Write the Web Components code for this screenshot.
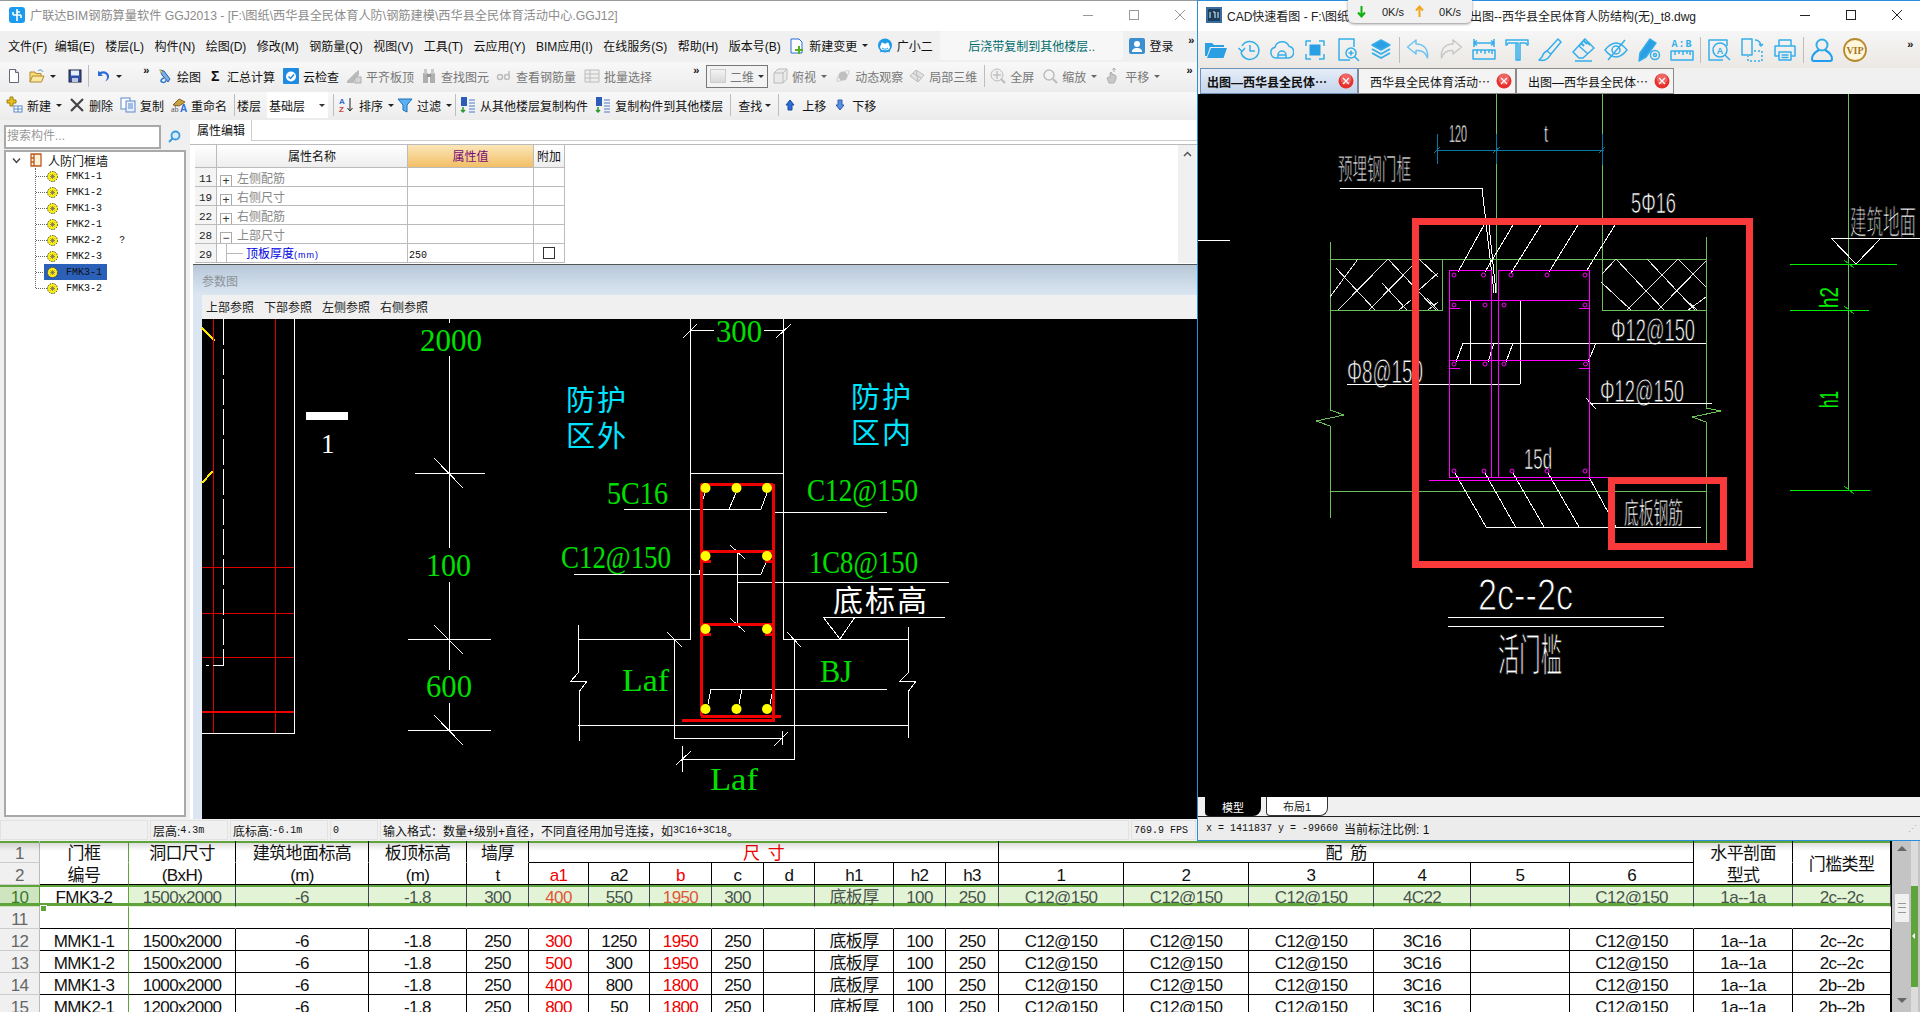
<!DOCTYPE html>
<html lang="zh">
<head>
<meta charset="utf-8">
<title>GGJ2013 + CAD</title>
<style>
  html, body { margin: 0; height: 100%; overflow: hidden; background: #f0f0f0; }
  body { font: 12px "Liberation Sans", "Noto Sans CJK SC", sans-serif; }
  .m { font: 10px "Liberation Mono", "Noto Sans CJK SC", monospace; }
</style>
</head>
<body>
<gl-desktop>
  <ggj-window>
    <title-bar slot="title" tone="gray" logo="ggj">广联达BIM钢筋算量软件 GGJ2013 - [F:\图纸\西华县全民体育人防\钢筋建模\西华县全民体育活动中心.GGJ12]</title-bar>
    <menu-bar slot="menu">
      <span>文件(F)</span><span style="margin-left:-3px">编辑(E)</span><span>楼层(L)</span><span>构件(N)</span><span>绘图(D)</span><span>修改(M)</span><span>钢筋量(Q)</span><span>视图(V)</span><span>工具(T)</span><span>云应用(Y)</span><span>BIM应用(I)</span><span>在线服务(S)</span><span>帮助(H)</span><span>版本号(B)</span>
      <tool-btn icon="newchange" caret style="margin-left:-2px">新建变更</tool-btn>
      <tool-btn icon="robot" style="margin-left:-2px">广小二</tool-btn>
      <notice-box>后浇带复制到其他楼层..</notice-box>
      <tool-btn icon="login" style="margin-left:-4px;">登录</tool-btn>
      <tool-more style="margin-left:4px"></tool-more>
    </menu-bar>
    <tool-bar slot="tools" h="30" style="padding-left:6px">
      <tool-btn icon="new"></tool-btn>
      <tool-btn icon="open" caret style="margin-left:7px"></tool-btn>
      <tool-btn icon="save" style="margin-left:11px"></tool-btn>
      <tool-sep style="margin-left:5px"></tool-sep>
      <tool-btn icon="undo" caret style="margin-left:6px"></tool-btn>
      <tool-more style="margin-left:21px"></tool-more>
      <tool-btn icon="draw" style="margin-left:5px">绘图</tool-btn>
      <tool-btn icon="sigma" tight style="margin-left:8px">汇总计算</tool-btn>
      <tool-btn icon="check" style="margin-left:8px">云检查</tool-btn>
      <tool-btn icon="align" dim style="margin-left:7px">平齐板顶</tool-btn>
      <tool-btn icon="find" dim style="margin-left:7px">查找图元</tool-btn>
      <tool-btn icon="glasses" dim style="margin-left:7px">查看钢筋量</tool-btn>
      <tool-btn icon="batch" dim style="margin-left:8px">批量选择</tool-btn>
      <tool-more style="margin-left:41px"></tool-more>
      <combo-box style="margin-left:4px" w="62" boxed dim>二维</combo-box>
      <tool-btn icon="cube" dim caret style="margin-left:4px">俯视</tool-btn>
      <tool-btn icon="orbit" dim style="margin-left:8px">动态观察</tool-btn>
      <tool-btn icon="part3d" dim style="margin-left:6px">局部三维</tool-btn>
      <tool-sep style="margin-left:7px"></tool-sep>
      <tool-btn icon="full" dim style="margin-left:5px">全屏</tool-btn>
      <tool-btn icon="zoom" dim caret style="margin-left:8px">缩放</tool-btn>
      <tool-btn icon="pan" dim caret style="margin-left:8px">平移</tool-btn>
      <tool-more style="margin-left:26px"></tool-more>
    </tool-bar>
    <tool-bar slot="tools" h="28" style="padding-left:7px">
      <tool-btn icon="plus" caret>新建</tool-btn>
      <tool-btn icon="cross" style="margin-left:7px">删除</tool-btn>
      <tool-btn icon="copy" style="margin-left:7px">复制</tool-btn>
      <tool-btn icon="rename" style="margin-left:7px">重命名</tool-btn>
      <tool-sep style="margin-left:7px"></tool-sep>
      <span style="margin-left:2px">楼层</span>
      <combo-box style="margin-left:6px" w="61">基础层</combo-box>
      <tool-sep style="margin-left:5px"></tool-sep>
      <tool-btn icon="sort" caret style="margin-left:5px">排序</tool-btn>
      <tool-btn icon="filter" caret style="margin-left:3px">过滤</tool-btn>
      <tool-sep style="margin-left:3px"></tool-sep>
      <tool-btn icon="floors" style="margin-left:4px">从其他楼层复制构件</tool-btn>
      <tool-btn icon="floors" style="margin-left:7px">复制构件到其他楼层</tool-btn>
      <tool-sep style="margin-left:7px"></tool-sep>
      <span style="margin-left:7px">查找</span><tool-btn caret style="margin-left:2px"></tool-btn>
      <tool-sep style="margin-left:7px"></tool-sep>
      <tool-btn icon="up" style="margin-left:3px">上移</tool-btn>
      <tool-btn icon="down" style="margin-left:6px">下移</tool-btn>
    </tool-bar>
    <tree-panel slot="side">
      <tree-item>FMK1-1</tree-item>
      <tree-item>FMK1-2</tree-item>
      <tree-item>FMK1-3</tree-item>
      <tree-item>FMK2-1</tree-item>
      <tree-item note="？">FMK2-2</tree-item>
      <tree-item>FMK2-3</tree-item>
      <tree-item selected>FMK3-1</tree-item>
      <tree-item>FMK3-2</tree-item>
    </tree-panel>
    <prop-table slot="main"></prop-table>
    <param-panel slot="main"></param-panel>
    <status-bar slot="status">
      <status-cell w="148"></status-cell>
      <status-cell w="78">层高:<span class="m">4.3m</span></status-cell>
      <status-cell w="98">底标高:<span class="m">-6.1m</span></status-cell>
      <status-cell w="48"><span class="m">0</span></status-cell>
      <status-cell w="749">输入格式：数量+级别+直径，不同直径用加号连接，如<span class="m">3C16+3C18</span>。</status-cell>
      <status-cell w="65"><span class="m">769.9 FPS</span></status-cell>
    </status-bar>
  </ggj-window>

  <cad-window>
    <title-bar slot="title" logo="cad">
      <span>CAD快速看图 - F:\图纸</span><span style="margin-left:121px">出图--西华县全民体育人防结构(无)_t8.dwg</span>
    </title-bar>
    <net-speed slot="float"></net-speed>
    <cad-toolbar slot="tools">
      <cad-icon name="folder"></cad-icon><cad-icon name="clock"></cad-icon><cad-icon name="cloud"></cad-icon><cad-icon name="frame"></cad-icon><cad-icon name="docz"></cad-icon><cad-icon name="layers"></cad-icon>
      <tool-sep></tool-sep>
      <cad-icon name="back"></cad-icon><cad-icon name="redo"></cad-icon><cad-icon name="ruler"></cad-icon><cad-icon name="tee"></cad-icon><cad-icon name="brush"></cad-icon><cad-icon name="eraser"></cad-icon><cad-icon name="eye"></cad-icon><cad-icon name="pengear"></cad-icon><cad-icon name="ab"></cad-icon>
      <tool-sep></tool-sep>
      <cad-icon name="doca"></cad-icon><cad-icon name="swap"></cad-icon><cad-icon name="print"></cad-icon>
      <tool-sep></tool-sep>
      <cad-icon name="user"></cad-icon><cad-icon name="vip"></cad-icon>
      <tool-more style="margin-left:auto;margin-right:4px"></tool-more>
    </cad-toolbar>
    <cad-tabs slot="tabs">
      <cad-tab active>出图—西华县全民体⋯</cad-tab>
      <cad-tab>西华县全民体育活动⋯</cad-tab>
      <cad-tab>出图—西华县全民体⋯</cad-tab>
    </cad-tabs>
    <cad-drawing slot="drawing"></cad-drawing>
    <layout-tabs slot="layouts"></layout-tabs>
    <cad-status slot="status"></cad-status>
  </cad-window>

  <rebar-sheet></rebar-sheet>
</gl-desktop>

<script>
const FONT = '"Liberation Sans", "Noto Sans CJK SC", sans-serif';

// coloured 16x16 icons of the left window
const ICONS = {
  ggj: '<rect x="0" y="0" width="16" height="16" rx="3" fill="#1b9bf0"/><path d="M8 2v12M4 8h8M4 5v3M12 8v3M8 5h3" stroke="#fff" stroke-width="1.6" fill="none"/>',
  cad: '<rect x="0" y="0" width="16" height="16" fill="#3a6c9c"/><rect x="2" y="2" width="12" height="12" fill="#1c3c60"/><path d="M4 5v6M7 5h2v6M12 5v6" stroke="#dfe" fill="none"/>',
  new: '<path d="M3.5 1.5h6l3 3v10h-9z" fill="#fff" stroke="#667"/><path d="M9.5 1.5v3h3" fill="#e6e6e6" stroke="#667"/>',
  open: '<path d="M1 14V4h5l1 1.5h5V8" fill="#f8d878" stroke="#b08a30"/><path d="M1 14l2.5-6H15l-2.5 6z" fill="#fbe7a0" stroke="#b08a30"/><path d="M9 3c2-2 4-1 5 1" stroke="#3a8ad0" fill="none"/>',
  save: '<rect x="2" y="2" width="12" height="12" fill="#3050a8" stroke="#223"/><rect x="4" y="2.5" width="8" height="5" fill="#e8eefc"/><rect x="5" y="10" width="6" height="4" fill="#bcc8e0"/>',
  undo: '<path d="M3 3v5h5L6 6c3-1.500 6 0 6 3 0 2-1 3.500-2 4.500 3-1 4.500-3.500 4-6C13 4 9 2 5 4z" fill="#2a6cd8"/>',
  draw: '<path d="M3 2l4 1 6 8-2 3-6-7z" fill="#7ab0e8" stroke="#2a5ca0"/><path d="M7 10c-3 1-4 3-2 4s4 0 4-2" fill="none" stroke="#2a7ad0" stroke-width="1.500"/><path d="M2 1l3 2-1 3z" fill="#e8c040"/>',
  sigma: '<text x="2" y="13" font-size="14" font-weight="bold" font-family="Liberation Sans" fill="#111">Σ</text>',
  check: '<rect x="0" y="0" width="16" height="16" rx="1" fill="#1e8ae0"/><circle cx="8" cy="8.500" r="5" fill="#fff"/><path d="M5.500 8.500l2 2 3.500-4" stroke="#1e8ae0" stroke-width="1.500" fill="none"/>',
  align: '<path d="M1 13l9-9 3-2v5l-5 6v2H1z" fill="#a8a8a8"/><rect x="9" y="9" width="6" height="6" fill="#ccc" stroke="#999"/>',
  find: '<rect x="2" y="5" width="5" height="10" fill="#999"/><rect x="9" y="5" width="5" height="10" fill="#999"/><rect x="3" y="1" width="3" height="5" fill="#bbb"/><rect x="10" y="1" width="3" height="5" fill="#bbb"/><rect x="6" y="6" width="4" height="3" fill="#777"/>',
  glasses: '<circle cx="4" cy="9" r="2.500" fill="none" stroke="#aaa" stroke-width="1.500"/><circle cx="11" cy="9" r="2.500" fill="none" stroke="#aaa" stroke-width="1.500"/><path d="M13 7V3" stroke="#aaa" stroke-width="1.500"/>',
  batch: '<path d="M1 2h14v12H1zM1 6h14M1 10h14M6 2v12" fill="#eee" stroke="#aaa"/>',
  cube: '<path d="M2 5l4-4h9v10l-4 4H2zM2 5h9v10M11 5l4-4" fill="#e8e8e8" stroke="#aaa"/>',
  orbit: '<ellipse cx="8" cy="8" rx="7.500" ry="2.500" fill="none" stroke="#bbb" transform="rotate(-40 8 8)"/><circle cx="8" cy="8" r="4.500" fill="#b0b0b0"/>',
  part3d: '<path d="M1 8l6-6 8 5-6 7z" fill="#ddd" stroke="#aaa"/><path d="M4 5l8 5M7 2l2 12" stroke="#aaa"/>',
  full: '<circle cx="7" cy="7" r="6" fill="#eee" stroke="#aaa"/><path d="M7 3v8M3 7h8" stroke="#999"/><path d="M11 11l4 4" stroke="#aaa" stroke-width="2"/>',
  zoom: '<circle cx="7" cy="7" r="5" fill="#f4f4f4" stroke="#aaa" stroke-width="1.500"/><path d="M11 11l4 4" stroke="#aaa" stroke-width="2"/>',
  pan: '<path d="M4 15l-2-5 2-1 1 1V5l1-1 1 1v2l1-1 1 1 1 0 1 1v3l-2 4z" fill="#bbb" stroke="#999"/><path d="M9 4V0M7.500 2L9 0l1.500 2" stroke="#999" fill="none"/>',
  plus: '<path d="M3 0h3v3h3v3H6v3H3V6H0V3h3z" fill="#e8c020" stroke="#a08010"/><rect x="7" y="9" width="8" height="6" fill="#fff" stroke="#5a8ac8"/><path d="M7 12h8M11 9v6" stroke="#5a8ac8"/>',
  cross: '<path d="M2 2l12 12M14 2L2 14" stroke="#444" stroke-width="2.200"/>',
  copy: '<rect x="1" y="1" width="9" height="11" fill="#fff" stroke="#5a8ac8"/><rect x="6" y="4" width="9" height="11" fill="#e8f0ff" stroke="#5a8ac8"/><path d="M8 7h5M8 9h5M8 11h5" stroke="#5a8ac8"/>',
  rename: '<path d="M2 8l6-6 6 3-6 4z" fill="#c8a040" stroke="#806020"/><text x="0" y="15" font-size="8" font-family="Liberation Serif" fill="#555">ab</text><text x="9" y="15" font-size="10" font-weight="bold" font-family="Liberation Sans" fill="#2a6cd8">A</text>',
  sort: '<text x="0" y="7" font-size="8" font-weight="bold" font-family="Liberation Sans" fill="#2a6cd8">A</text><text x="0" y="15" font-size="8" font-weight="bold" font-family="Liberation Sans" fill="#d04040">Z</text><path d="M11 1v13M8.500 11l2.500 3 2.500-3" stroke="#222" fill="none"/>',
  filter: '<path d="M1 2h14L10 8v7l-4-2V8z" fill="#5ab0f0" stroke="#1c70b8"/>',
  floors: '<rect x="1" y="0" width="6" height="9" fill="#2a5cb8"/><path d="M3 10v5M1 13l2 2 2-2" stroke="#2a9a30" stroke-width="1.500" fill="none"/><path d="M9 3h6M9 6h6M9 9h6M9 12h6M9 15h6" stroke="#4a7ac8"/>',
  up: '<path d="M8 3l4 5h-2v5H6V8H4z" fill="#2a6cd8" stroke="#1a4ca0"/>',
  down: '<path d="M8 13l4-5h-2V3H6v5H4z" fill="#5a8ce0" stroke="#2a5cb0"/>',
  newchange: '<path d="M2 1h8l3 3v11H2z" fill="#fff" stroke="#2a6cd8"/><path d="M11 8v3h3v2h-3v3H9v-3H6v-2h3V8z" fill="#50b020"/>',
  robot: '<circle cx="8" cy="7.500" r="7" fill="#1e9be8"/><ellipse cx="8" cy="9" rx="5" ry="3.500" fill="#fff"/><circle cx="5.500" cy="6" r="1.500" fill="#fff"/><circle cx="10.500" cy="6" r="1.500" fill="#fff"/><path d="M5 10c1.500 1.500 4.500 1.500 6 0" stroke="#1e9be8" fill="none"/><path d="M3 14l2-1h6l2 1" stroke="#1e9be8" fill="none"/>',
  login: '<rect x="0" y="0" width="16" height="16" rx="2" fill="#3a8fd0"/><circle cx="8" cy="6" r="3" fill="#fff"/><path d="M3 14c0-3 2-4 5-4s5 1 5 4z" fill="#fff"/>'
};

// blue line icons of the CAD toolbar, 24x24
const CAD_ICONS = {
  folder: '<path d="M1 5h7l2 2h10v2H6l-3 9H1z" fill="#2a9fe4" stroke="none"/><path d="M7 10h16l-3.500 10H3z" fill="#2a9fe4" stroke="none"/>',
  clock: '<path d="M5 8a9 9 0 1 1-1 6"/><path d="M1.500 10L5 13.500 8 10" /><path d="M13 7v6h5"/>',
  cloud: '<path d="M6 20a5.500 5.500 0 0 1-1-10.800 7.500 7.500 0 0 1 14-1A6 6 0 0 1 18.500 20z"/><path d="M8 20v-3a4 4 0 0 1 8 0v3M8 17h8"/>',
  frame: '<path d="M3 8V3h5M16 3h5v5M21 16v5h-5M8 21H3v-5"/><rect x="6.500" y="6.500" width="11" height="11" fill="#2a9fe4" stroke="none"/>',
  docz: '<path d="M14 22H3V1h15v8"/><circle cx="15" cy="15" r="5"/><path d="M18.500 18.500L23 23M15 12.500v5M12.500 15h5"/>',
  layers: '<path d="M12 2l9 5-9 5-9-5z" fill="#2a9fe4"/><path d="M3 11l9 5 9-5M3 15l9 5 9-5" stroke-width="2"/>',
  back: '<path d="M1.500 9L10 2v4c8 0 12.500 5 11.500 14-1.500-5-5-8-11.500-7.500V16z" stroke="#6ec4f0"/>',
  redo: '<path d="M22.500 9L14 2v4C6 6 1.500 11 2.500 20c1.500-5 5-8 11.500-7.500V16z" stroke="#c8c8c8"/>',
  ruler: '<path d="M2 1v8M22 1v8M2 5h20M5 2.500L2 5l3 2.500M19 2.500L22 5l-3 2.500"/><rect x="1" y="12" width="22" height="9"/><path d="M5 12v4M9 12v3M13 12v4M17 12v3M20 12v4"/>',
  tee: '<path d="M1 2h22v5h-1l-1-2h-6v17h-2V5H3L2 7H1z"/><path d="M11 5v17h2"/>',
  brush: '<path d="M20 1l3 3-10 12-4-3z"/><path d="M9 13c-3 1-4 3-5 6l-3 3c4 1 9 0 12-6"/>',
  eraser: '<path d="M14 1l9 9-11 10H8L2 14z"/><path d="M8 8l9 8M14 1l-6 7" /><path d="M10 5l3 3M13 3l3 3M16 4l3 3" stroke-width="2"/><path d="M4 23h17"/>',
  eye: '<path d="M1 12c4-5 7.500-7 11-7s7 2 11 7c-4 5-7.500 7-11 7s-7-2-11-7z"/><circle cx="12" cy="12" r="4"/><path d="M4 22L21 2"/>',
  pengear: '<path d="M13 1l6 4-10 14-7 4 1-8z" fill="#2a9fe4"/><circle cx="18" cy="17" r="4.500"/><circle cx="18" cy="17" r="1.500"/>',
  ab: '<text x="12" y="9" font-size="10" font-weight="bold" text-anchor="middle" fill="#35aeea" stroke="none" font-family="Liberation Mono" letter-spacing="1">A:B</text><rect x="1" y="13" width="22" height="9"/><path d="M5 13v4M9 13v3M13 13v4M17 13v3M20 13v4"/>',
  doca: '<path d="M20 8V2H2v20h14"/><circle cx="13" cy="12" r="7"/><path d="M18 17l5 5"/><text x="13" y="15.500" font-size="9" font-weight="bold" text-anchor="middle" fill="#35aeea" stroke="none" font-family="Liberation Sans">A</text>',
  swap: '<rect x="2" y="1" width="10" height="16"/><path d="M14 13h8v10H8v-5" stroke-dasharray="2 2"/><path d="M15 2c3 0 5 2 6 5M19 6l2 2 2-2"/>',
  print: '<path d="M6 8V2h12v6M6 18H2V8h20v10h-4"/><path d="M6 14h12v8H6zM8.500 17h7M8.500 19.500h7"/>',
  user: '<circle cx="12" cy="7" r="5.500" stroke-width="2"/><path d="M9 12c-4 2-7 5-7 9 0 1 1 2 2 2h16c1 0 2-1 2-2 0-4-3-7-7-9" stroke-width="2" stroke="#1e9ef0"/>',
  vip: '<circle cx="12" cy="12" r="11" stroke="#b88a30" stroke-width="1.800" fill="#fff6dc"/><text x="12" y="15.500" font-size="10" font-weight="bold" text-anchor="middle" fill="#a87820" stroke="none" font-family="Liberation Serif">VIP</text>'
};

class GlDesktop extends HTMLElement {
  connectedCallback() {
    this.attachShadow({ mode: "open" }).innerHTML = `
      <style>
        :host { display: grid; width: 1920px; height: 1012px; overflow: hidden;
          grid-template-columns: 1197px 723px; grid-template-rows: 841px 171px; }
        ::slotted(rebar-sheet) { grid-column: 1 / 3; }
      </style>
      <slot></slot>`;
  }
}

class GgjWindow extends HTMLElement {
  connectedCallback() {
    this.attachShadow({ mode: "open" }).innerHTML = `
      <style>
        :host { display: flex; flex-direction: column; min-width: 0; background: #f0f0f0; border-top: 1px solid #999; box-sizing: border-box; font: 12px ${FONT}; color: #111; }
        .body { display: flex; height: 699px; background: #fff; }
        .side { width: 190px; flex: none; background: #f0f0f0; }
        .main { flex: 1; min-width: 0; display: flex; flex-direction: column; }
      </style>
      <slot name="title"></slot>
      <slot name="menu"></slot>
      <slot name="tools"></slot>
      <div class="body">
        <div class="side"><slot name="side"></slot></div>
        <div class="main"><slot name="main"></slot></div>
      </div>
      <slot name="status"></slot>`;
  }
}

class TitleBar extends HTMLElement {
  connectedCallback() {
    const gray = this.getAttribute("tone") === "gray";
    const c = gray ? "#999" : "#222";
    const logo = this.getAttribute("logo");
    this.attachShadow({ mode: "open" }).innerHTML = `
      <style>
        :host { display: flex; align-items: center; height: 30px; flex: none; box-sizing: border-box; padding-bottom: 2px; background: #fff; font: ${gray ? 12.2 : 12}px ${FONT}; color: ${gray ? "#8c8c8c" : "#222"}; white-space: nowrap; }
        svg { flex: none; }
        .logo { width: 16px; height: 16px; margin: 0 5px 0 ${logo === "cad" ? 8 : 9}px; }
        .txt { flex: 1; min-width: 0; overflow: hidden; }
        .ctl { display: flex; margin-right: ${gray ? 11 : 17}px; gap: 34px; }
        .ctl svg { width: 12px; height: 12px; }
      </style>
      <svg class="logo" viewBox="0 0 16 16">${ICONS[logo]}</svg>
      <div class="txt"><slot></slot></div>
      <div class="ctl">
        <svg viewBox="0 0 12 12"><path d="M1 6.500h10" stroke="${c}" fill="none"/></svg>
        <svg viewBox="0 0 12 12"><rect x="1.500" y="1.500" width="9" height="9" stroke="${c}" fill="none"/></svg>
        <svg viewBox="0 0 12 12"><path d="M1 1l10 10M11 1L1 11" stroke="${c}" fill="none"/></svg>
      </div>`;
  }
}

class MenuBar extends HTMLElement {
  connectedCallback() {
    this.attachShadow({ mode: "open" }).innerHTML = `
      <style>
        :host { display: flex; align-items: center; gap: 10.5px; height: 31px; flex: none; box-sizing: border-box; padding: 0 0 2px 8px; background: #f0f0f0; font: 12px ${FONT}; color: #111; white-space: nowrap; }
      </style>
      <slot></slot>`;
  }
}

class NoticeBox extends HTMLElement {
  connectedCallback() {
    this.attachShadow({ mode: "open" }).innerHTML = `
      <style>
        :host { display: flex; align-items: center; justify-content: center; width: 186px; height: 29px; box-sizing: border-box; background: #f7f7f7; color: #006d6d; border-radius: 3px; margin-left: -3px; font: 12px ${FONT}; }
      </style>
      <slot></slot>`;
  }
}

class ToolBar extends HTMLElement {
  connectedCallback() {
    const h = this.getAttribute("h") || 30;
    this.attachShadow({ mode: "open" }).innerHTML = `
      <style>
        :host { display: flex; align-items: center; height: ${h}px; flex: none; box-sizing: border-box; padding-bottom: 2px; background: linear-gradient(#f8f8f8, #ececec); font: 12px ${FONT}; color: #111; white-space: nowrap; }
      </style>
      <slot></slot>`;
  }
}

class ToolBtn extends HTMLElement {
  connectedCallback() {
    const icon = this.getAttribute("icon");
    const tight = this.hasAttribute("tight");
    const caret = this.hasAttribute("caret");
    const label = this.textContent.trim();
    this.attachShadow({ mode: "open" }).innerHTML = `
      <style>
        :host { display: inline-flex; align-items: center; flex: none; gap: ${tight ? 2 : 4}px; font: 12px ${FONT}; color: #111; }
        :host([dim]) { color: #777; }
        :host([dim]) svg { opacity: .75; }
        svg { width: 16px; height: 16px; flex: none; overflow: visible; }
        .caret { width: 0; height: 0; border: 3px solid transparent; border-top: 3px solid #222; border-bottom: 0; margin-left: 1px; }
        :host([dim]) .caret { border-top-color: #666; }
      </style>
      ${icon ? `<svg viewBox="0 0 16 16">${ICONS[icon]}</svg>` : ""}
      ${label ? "<slot></slot>" : ""}
      ${caret ? '<span class="caret"></span>' : ""}`;
  }
}

class ToolSep extends HTMLElement {
  connectedCallback() {
    this.attachShadow({ mode: "open" }).innerHTML = `
      <style>:host { display: block; width: 1px; height: 22px; background: #bdbdbd; flex: none; }</style>`;
  }
}

class ToolMore extends HTMLElement {
  connectedCallback() {
    this.attachShadow({ mode: "open" }).innerHTML = `
      <style>:host { display: block; flex: none; width: 9px; height: 22px; font: bold 11px/12px "Liberation Mono", monospace; color: #111; letter-spacing: -2px; }</style>»`;
  }
}

class ComboBox extends HTMLElement {
  connectedCallback() {
    const boxed = this.hasAttribute("boxed");
    this.attachShadow({ mode: "open" }).innerHTML = `
      <style>
        :host { display: flex; align-items: center; flex: none; width: ${this.getAttribute("w")}px; height: ${boxed ? 23 : 26}px; box-sizing: border-box; background: #fff; padding-left: 2px; gap: 4px; font: 12px ${FONT}; color: #111; position: relative; }
        :host([boxed]) { border: 1px solid #777; background: #f3f3f3; padding-left: 3px; color: #777; }
        i { width: 14px; height: 12px; background: linear-gradient(#f4f4f4,#d8d8d8); border: 1px solid #ccc; }
        .caret { margin-left: auto; margin-right: 3px; width: 0; height: 0; border: 3px solid transparent; border-top-color: #333; border-bottom: 0; }
      </style>
      ${boxed ? "<i></i>" : ""}<slot></slot><span class="caret"></span>`;
  }
}

class TreePanel extends HTMLElement {
  connectedCallback() {
    this.attachShadow({ mode: "open" }).innerHTML = `
      <style>
        :host { display: block; height: 699px; box-sizing: border-box; padding: 5px 4px 0 4px; font: 12px ${FONT}; }
        .search { display: flex; align-items: center; gap: 5px; height: 24px; }
        .box { width: 157px; height: 24px; box-sizing: border-box; border: 2px solid #a9a9a9; background: #fff; color: #999; padding: 0 1px; line-height: 18px; }
        .search svg { width: 14px; height: 14px; margin-left: 1px; }
        .tree { height: 667px; margin-top: 1px; box-sizing: border-box; border: 2px solid #a9a9a9; background: #fff; }
        .root { display: flex; align-items: center; height: 16px; }
        .root .chev { width: 9px; height: 9px; margin-left: 6px; }
        .root .door { width: 12px; height: 14px; margin: 0 6px 0 9px; }
        .kids { margin-left: 29px; border-left: 1px dotted #666; height: 120px; }
      </style>
      <div class="search">
        <div class="box">搜索构件...</div>
        <svg viewBox="0 0 14 14"><circle cx="8.500" cy="5.500" r="4" fill="#d8ecfa" stroke="#3a9be0" stroke-width="1.800"/><path d="M5.500 8.500L2 12" stroke="#3a9be0" stroke-width="2"/></svg>
      </div>
      <div class="tree">
        <div class="root">
          <svg class="chev" viewBox="0 0 9 9"><path d="M1 2.500l3.500 4 3.500-4" fill="none" stroke="#444" stroke-width="1.400"/></svg>
          <svg class="door" viewBox="0 0 12 14"><path d="M1 1h10v12H1zM4 1v12M1 5h3M1 9h3" fill="#fff2d8" stroke="#b85a20" stroke-width="1.300"/></svg>
          <span>人防门框墙</span>
        </div>
        <div class="kids"><slot></slot></div>
      </div>`;
  }
}

class TreeItem extends HTMLElement {
  connectedCallback() {
    const note = this.getAttribute("note");
    this.attachShadow({ mode: "open" }).innerHTML = `
      <style>
        :host { display: flex; align-items: center; height: 16px; font: 10px "Liberation Mono", monospace; color: #111; position: relative; white-space: nowrap; }
        .dash { width: 11px; border-top: 1px dotted #666; }
        svg { width: 11px; height: 11px; margin-right: 8px; flex: none; position: relative; }
        .hi { position: absolute; left: 8px; top: 0; width: 63px; height: 16px; background: #2b60b8; }
        b { font-weight: normal; position: absolute; left: 81px; font-size: 10px; }
        span { position: relative; }
      </style>
      ${this.hasAttribute("selected") ? '<div class="hi"></div>' : ""}
      <div class="dash"></div>
      <svg viewBox="0 0 11 11"><circle cx="5.500" cy="5.500" r="5" fill="#ffef10" stroke="#444" stroke-dasharray="1.500 1"/><path d="M3 5.500h5M5.500 3v5M3.500 3.500l4 4M7.500 3.500l-4 4" stroke="#666" stroke-width=".7"/></svg>
      <span><slot></slot></span>
      ${note ? `<b>${note}</b>` : ""}`;
  }
}

class PropTable extends HTMLElement {
  connectedCallback() {
    const rows = [["11", "+", "左侧配筋"], ["19", "+", "右侧尺寸"], ["22", "+", "右侧配筋"], ["28", "−", "上部尺寸"]];
    this.attachShadow({ mode: "open" }).innerHTML = `
      <style>
        :host { display: block; flex: none; height: 144px; font: 12px ${FONT}; color: #111; background: #fff; }
        .tabs { height: 21px; border-bottom: 1px solid #ccc; box-sizing: border-box; }
        .tab { display: inline-block; width: 62px; height: 21px; box-sizing: border-box; background: #fff; border-right: 1px solid #ccc; padding: 1px 0 0 7px; font-size: 12px; }
        .wrap { display: flex; margin-top: 3px; border-top: 1px solid #bbb; height: 119px; box-sizing: border-box; padding-left: 5px; }
        table { border-collapse: separate; border-spacing: 0; table-layout: fixed; width: 370px; align-self: flex-start; }
        td, th { border-right: 1px solid #bbb; border-bottom: 1px solid #bbb; padding: 0; font-weight: normal; height: 19px; box-sizing: border-box; line-height: 17px; vertical-align: bottom; overflow: hidden; }
        th { height: 23px; line-height: 21px; background: linear-gradient(#fff, #eee); }
        th.v { background: linear-gradient(#fbe6b8, #f2bf66); color: #7a0a7a; }
        th span { position: relative; top: 1px; }
        .t { position: relative; top: 2px; }
        .n { font: 11px/17px "Liberation Mono", monospace; text-align: center; background: #f4f4f4; color: #222; }
        .p { color: #888; white-space: nowrap; }
        .p i { display: inline-block; width: 12px; height: 12px; line-height: 11px; border: 1px solid #aaa; text-align: center; color: #333; font-style: normal; margin: 0 5px 0 3px; vertical-align: -2px; font-size: 12px; box-sizing: border-box; }
        .blue { color: #0000e0; padding-left: 29px; position: relative; white-space: nowrap; }
        .blue::before { content: ""; position: absolute; left: 9px; top: 0; bottom: 0; border-left: 1px solid #bbb; }
        .blue::after { content: ""; position: absolute; left: 9px; top: 9px; width: 17px; border-top: 1px solid #bbb; }
        .blue small { font-size: 9px; letter-spacing: 1px; }
        .mono { font: 10px/17px "Liberation Mono", monospace; padding-left: 1px; }
        .chk { text-align: center; vertical-align: middle; }
        .chk i { display: block; margin: auto; width: 12px; height: 12px; border: 1px solid #333; box-sizing: border-box; }
        .sb { margin-left: auto; width: 18px; margin-right: 1px; background: #f0f0f0; text-align: center; padding-top: 6px; height: 112px; }
        .sb svg { display: block; margin: auto; }
      </style>
      <div class="tabs"><span class="tab">属性编辑</span></div>
      <div class="wrap">
        <table>
          <colgroup><col style="width:22px"><col style="width:191px"><col style="width:126px"><col style="width:31px"></colgroup>
          <tr><th></th><th><span>属性名称</span></th><th class="v"><span>属性值</span></th><th><span>附加</span></th></tr>
          ${rows.map(r => `<tr><td class="n"><span class="t">${r[0]}</span></td><td class="p"><span class="t"><i>${r[1]}</i>${r[2]}</span></td><td></td><td></td></tr>`).join("")}
          <tr><td class="n"><span class="t">29</span></td><td class="blue"><span class="t">顶板厚度<small>(mm)</small></span></td><td class="mono"><span class="t">250</span></td><td class="chk"><i></i></td></tr>
        </table>
        <div class="sb"><svg width="9" height="6" viewBox="0 0 9 6"><path d="M1 5l3.500-3.500L8 5" fill="none" stroke="#555" stroke-width="1.500"/></svg></div>
      </div>`;
  }
}

class ParamPanel extends HTMLElement {
  connectedCallback() {
    this.attachShadow({ mode: "open" }).innerHTML = `
      <style>
        :host { display: flex; flex-direction: column; flex: 1; margin-left: 3px; border-top: 1px solid #555; font: 12px ${FONT}; min-height: 0; }
        .head { height: 30px; flex: none; background: linear-gradient(#b8c8d8, #dbe6f2); color: #8c9299; padding: 7px 0 0 9px; box-sizing: border-box; }
        .rest { display: flex; flex: 1; background: #dce6f2; padding-left: 9px; min-height: 0; }
        .col { flex: 1; display: flex; flex-direction: column; min-width: 0; }
        .bar { display: flex; gap: 10px; align-items: center; height: 24px; flex: none; box-sizing: border-box; padding: 0 0 2px 4px; background: #f0f0f0; color: #222; }
        param-drawing { flex: 1; }
      </style>
      <div class="head">参数图</div>
      <div class="rest">
        <div class="col">
          <div class="bar"><span>上部参照</span><span>下部参照</span><span>左侧参照</span><span>右侧参照</span></div>
          <param-drawing></param-drawing>
        </div>
      </div>`;
  }
}

// viewBox uses page coordinates, so points read straight off the screenshot
class ParamDrawing extends HTMLElement {
  connectedCallback() {
    const g = (x, y, len, s, size = 31) => `<text x="${x}" y="${y}" font-size="${size}" textLength="${len}" lengthAdjust="spacingAndGlyphs" fill="#00e000">${s}</text>`;
    const c = (x, y, s) => `<text x="${x}" y="${y}" font-size="29" letter-spacing="2" fill="#00e5ff">${s}</text>`;
    const dots = [[705.5,488],[736.5,488],[767,488],[705.5,556],[767,556],[705.5,629],[767,629],[705.5,709],[736.5,709],[767,709]];
    this.attachShadow({ mode: "open" }).innerHTML = `
      <style>
        :host { display: block; background: #000; min-height: 0; }
        svg { display: block; overflow: visible; font-family: "Liberation Serif", "Noto Sans CJK SC", serif; }
      </style>
      <svg width="995" height="499" viewBox="202 319 995 499" shape-rendering="crispEdges">
        <path d="M202 328L215 341M202 483L213 471" stroke="#ffe600" stroke-width="2" fill="none"/>
        <path d="M213 319V733M275 319V733M202 567H294M202 613H294M202 657H294" stroke="#e00000" fill="none"/>
        <path d="M202 712H294" stroke="#f00000" stroke-width="1.500" fill="none"/>
        <path d="M294 319V733H202" stroke="#fff" fill="none"/>
        <path d="M223 319V665H206" stroke="#fff" stroke-dasharray="26 4" fill="none"/>
        <rect x="306" y="412" width="42" height="8" fill="#fff"/>
        <text x="321" y="453" font-size="27" fill="#fff">1</text>
        <path d="M449 319V323M449 356V548M449 582V670M449 703V730M415 473H485M408 639H491M408 730H491M434 458L463 488M434 625L463 654M434 715L463 745" stroke="#fff" fill="none"/>
        ${g(420, 351, 62, "2000")}${g(426, 576, 45, "100")}${g(426, 697, 46, "600")}
        ${c(566, 411, "防护")}${c(566, 447, "区外")}${c(851, 408, "防护")}${c(851, 444, "区内")}
        <path d="M690 319V639H578M783 319V639H908M690 473H783M690 330H714M764 330H783M683 338L697 324M776 338L791 324" stroke="#fff" fill="none"/>
        <path d="M578 625V673L571 681H587L579 692V741M908 627V673L900 681H916L908 692V738M578 725H908" stroke="#fff" fill="none"/>
        <path d="M674 639V738H782M782 731V745M774 746L788 732M667 632L682 647M794 639V759H682M682 746V772M676 765L691 751M787 632L801 647" stroke="#fff" fill="none"/>
        ${g(716, 342, 46, "300")}
        <path d="M624 509H761M574 574H761M705 493L700 509M736 493L729 509M767 493L761 509M703 560L699 574M767 560L761 574M773 512H887M737 582H949M737 552V625M730 545L745 559M730 618L745 632M823 617H945M823 617L840 639L855 617M711 689H887M711 689L708 704M742 689L739 704M773 689L770 704" stroke="#fff" fill="none"/>
        <path d="M701 484V716M773 484V722M701 484H773M701 551H773M701 624H773M701 716H781M682 720H773" stroke="#f00000" stroke-width="3" fill="none"/>
        <path d="M701 561H711M765 561H773M701 634H711M765 634H773" stroke="#f00000" stroke-width="3" fill="none"/>
        ${dots.map(d => `<circle cx="${d[0]}" cy="${d[1]}" r="5" fill="#ffff00" shape-rendering="auto"/>`).join("")}
        ${g(607, 504, 61, "5C16")}${g(561, 568, 110, "C12@150")}${g(807, 501, 111, "C12@150")}${g(809, 573, 109, "1C8@150")}
        <text x="833" y="611" font-size="30" letter-spacing="2" fill="#fff">底标高</text>
        ${g(622, 691, 47, "Laf")}${g(710, 790, 48, "Laf")}${g(820, 682, 32, "BJ")}
      </svg>`;
  }
}

class StatusBar extends HTMLElement {
  connectedCallback() {
    this.attachShadow({ mode: "open" }).innerHTML = `
      <style>
        :host { display: flex; gap: 2px; height: 21px; flex: none; box-sizing: border-box; padding-top: 1px; background: #f0f0f0; font: 12px ${FONT}; color: #111; white-space: nowrap; }
      </style>
      <slot></slot>`;
  }
}

class StatusCell extends HTMLElement {
  connectedCallback() {
    this.attachShadow({ mode: "open" }).innerHTML = `
      <style>
        :host { display: flex; align-items: center; flex: none; width: ${this.getAttribute("w")}px; box-sizing: border-box; padding-left: 2px; border: 1px solid #e2e2e2; font: 12px ${FONT}; overflow: hidden; }
      </style>
      <slot></slot>`;
  }
}

class CadWindow extends HTMLElement {
  connectedCallback() {
    this.attachShadow({ mode: "open" }).innerHTML = `
      <style>
        :host { display: flex; flex-direction: column; position: relative; box-sizing: border-box; border: 1px solid #2b8fdc; border-right: 0; background: #f0f0f0; min-width: 0; }
      </style>
      <slot name="title"></slot>
      <slot name="float"></slot>
      <slot name="tools"></slot>
      <slot name="tabs"></slot>
      <slot name="drawing"></slot>
      <slot name="layouts"></slot>
      <slot name="status"></slot>`;
  }
}

class NetSpeed extends HTMLElement {
  connectedCallback() {
    this.attachShadow({ mode: "open" }).innerHTML = `
      <style>
        :host { position: absolute; left: 150px; top: -1px; width: 124px; height: 23px; box-sizing: border-box; background: #f1f1f1; border-radius: 0 0 6px 6px; box-shadow: 0 1px 3px rgba(0,0,0,.45); display: flex; align-items: center; font: 11px ${FONT}; color: #222; padding-left: 9px; }
        svg { width: 9px; height: 13px; flex: none; }
      </style>
      <svg viewBox="0 0 9 13"><path d="M4.500 1v10M1 7.500l3.500 4 3.500-4" fill="none" stroke="#10b010" stroke-width="2"/></svg>
      <span style="margin-left:16px">0K/s</span>
      <svg style="margin-left:11px" viewBox="0 0 9 13"><path d="M4.500 12V2M1 5.500l3.500-4 3.500 4" fill="none" stroke="#f0a820" stroke-width="2"/></svg>
      <span style="margin-left:15px">0K/s</span>`;
  }
}

class CadToolbar extends HTMLElement {
  connectedCallback() {
    this.attachShadow({ mode: "open" }).innerHTML = `
      <style>
        :host { display: flex; align-items: center; gap: 9px; height: 37px; flex: none; padding-left: 6px; box-sizing: border-box; background: linear-gradient(#f6f6f6, #ebe8e4); }
        ::slotted(tool-sep) { height: 26px; margin: 0 -3px; }
      </style>
      <slot></slot>`;
  }
}

class CadIcon extends HTMLElement {
  connectedCallback() {
    this.attachShadow({ mode: "open" }).innerHTML = `
      <style>
        :host { display: block; width: 24px; height: 24px; flex: none; }
        svg { display: block; fill: none; stroke: #35aeea; stroke-width: 1.500; stroke-linejoin: round; }
      </style>
      <svg width="24" height="24" viewBox="0 0 24 24">${CAD_ICONS[this.getAttribute("name")]}</svg>`;
  }
}

class CadTabs extends HTMLElement {
  connectedCallback() {
    this.attachShadow({ mode: "open" }).innerHTML = `
      <style>:host { display: flex; height: 26px; flex: none; padding-left: 2px; background: #f0f0f0; }</style>
      <slot></slot>`;
  }
}

class CadTab extends HTMLElement {
  connectedCallback() {
    this.attachShadow({ mode: "open" }).innerHTML = `
      <style>
        :host { display: flex; align-items: center; width: 158px; height: 26px; box-sizing: border-box; border: 1px solid #8a8a8a; padding: 0 3px 0 11px; background: #f4f4f4; font: 12px ${FONT}; color: #111; white-space: nowrap; }
        :host([active]) { background: linear-gradient(#e6eef8, #c4d4ea); border-color: #6d8fb8; font-weight: bold; padding-left: 6px; }
        svg { width: 16px; height: 16px; margin-left: auto; flex: none; }
      </style>
      <slot></slot>
      <svg viewBox="0 0 16 16"><circle cx="8" cy="8" r="7.500" fill="#e8302c"/><circle cx="8" cy="6" r="5.500" fill="#fff" opacity=".25"/><path d="M5 5l6 6M11 5l-6 6" stroke="#fff" stroke-width="1.200"/></svg>`;
  }
}

class CadDrawing extends HTMLElement {
  connectedCallback() {
    // black stroke on top of the fill eats the glyph down to the thin single-line look of shx fonts
    const t = (x, y, size, len, s, fill = "#fff") => `<text x="${x}" y="${y}" font-size="${size}" textLength="${len}" lengthAdjust="spacingAndGlyphs" fill="${fill}" stroke="#000" stroke-width="${(size * 0.025).toFixed(2)}">${s}</text>`;
    const dots = [[1454,275],[1483.5,275],[1511,275],[1547,275],[1585,275],[1454,305],[1485,305],[1504,305],[1585,305],[1454,364],[1485,364],[1504,364],[1585.5,364],[1454,471],[1484,471],[1512,471],[1547,471],[1585,471]];
    this.attachShadow({ mode: "open" }).innerHTML = `
      <style>
        :host { display: block; height: 703px; flex: none; background: #000; overflow: hidden; }
        svg { display: block; font-family: "Liberation Sans", "Noto Sans CJK SC", sans-serif; }
      </style>
      <svg width="722" height="703" viewBox="1198 94 722 703" shape-rendering="crispEdges">
        ${t(1449, 142, 24, 18, "120")}${t(1544, 142, 24, 4, "t")}
        ${t(1338, 180, 29, 73, "预埋钢门框", "#d8d8d8")}
        ${t(1631, 213, 29, 45, "5Φ16")}
        ${t(1611, 341, 31, 84, "Φ12@150")}${t(1600, 402, 31, 84, "Φ12@150")}${t(1347, 383, 33, 76, "Φ8@150")}
        ${t(1524, 469, 30, 28, "15d")}
        ${t(1624, 524, 29, 59, "底板钢筋")}
        <text transform="translate(1850 234) scale(.5 1)" font-size="33" fill="#fff" stroke="#000" stroke-width="1.200">建筑地面</text>
        ${t(1478, 610, 44, 95, "2c--2c")}
        ${t(1498, 671, 44, 64, "活门槛")}
        <path d="M1198 240H1230" stroke="#fff" fill="none"/>
        <path d="M1496.500 94V293M1602 94V310M1848 94V490" stroke="#6cc05c" fill="none"/>
        <path d="M1437 150H1604M1437 134V164M1496.500 134V164M1602 134V165M1434 153L1440 147M1493 153L1500 147M1599 153L1605 147" stroke="#0878a8" fill="none"/>
        <path d="M1340 188H1482L1494 293M1489 225L1496 293" stroke="#fff" fill="none"/>
        <path d="M1330 259H1706M1330 310H1442V259M1602 310H1706M1330 242V410L1344 415L1316 421L1330 426V518M1706 237V408L1721 411L1692 417L1706 422V543M1330 491H1706" stroke="#6cc05c" fill="none"/>
        <path d="M1330 297L1358 259M1336 268L1375 310M1338 310L1388 259M1388 259L1436 310M1369 310L1419 259M1382 283L1407 310M1399 310L1411 300M1419 259L1438 277M1419 290L1438 273M1427 298L1438 310M1428 310L1438 302" stroke="#e8e8e8" fill="none"/>
        <path d="M1602 274L1616 259M1601 282L1631 310M1627 310L1678 259M1647 259L1695 310M1658 310L1706 261M1678 259L1706 287M1616 259L1664 310M1686 300L1697 310M1688 310L1706 297" stroke="#e8e8e8" fill="none"/>
        <path d="M1458 272L1484 225M1485 272L1513 225M1511 273L1541 225M1549 272L1578 225M1587 270L1615 225" stroke="#fff" fill="none"/>
        <path d="M1470 300V384M1520 300V384M1463 343H1706M1463 343L1456 362M1494 343L1488 362M1513 343L1506 362M1596 343L1588 362M1347 384H1520M1591 403H1712M1586 398L1596 409" stroke="#fff" fill="none"/>
        <path d="M1455 473L1486 527M1485 473L1515.500 527M1513 473L1544 527M1548 473L1579 527M1589 477L1616 527M1486 527H1701" stroke="#fff" fill="none"/>
        <path d="M1449 270V477M1449 270H1491V477M1498.500 270V477M1498.500 270H1589.500V477M1449 477H1619M1429 480H1589.500M1449 300H1589.500M1449 360H1589.500M1449 308H1460M1579 308H1589.500M1449 368H1460M1579 368H1589.500" stroke="#ff00ff" fill="none"/>
        ${dots.map(d => `<circle cx="${d[0]}" cy="${d[1]}" r="2" fill="#000" stroke="#ff00ff" shape-rendering="auto"/>`).join("")}
        <path d="M1831 238H1920M1831 238L1856 264L1881 238" stroke="#fff" fill="none"/>
        <path d="M1790 264H1897M1790 310H1869M1790 490H1870" stroke="#00f000" fill="none"/>
        <path d="M1844 260L1854 268M1844 306L1854 314M1844 486L1854 494" stroke="#00c000" fill="none"/>
        <text transform="translate(1838 308) rotate(-90)" font-size="26" textLength="21" lengthAdjust="spacingAndGlyphs" fill="#00f000">h2</text>
        <text transform="translate(1838 408) rotate(-90)" font-size="26" textLength="17" lengthAdjust="spacingAndGlyphs" fill="#00f000">h1</text>
        <path d="M1448 617H1664M1448 626H1664" stroke="#fff" fill="none"/>
        <path d="M1415.500 221.500H1749.500V564.500H1415.500ZM1611.500 480.500H1723.500V546.500H1611.500Z" stroke="#fa3a3a" stroke-width="7" fill="none"/>
      </svg>`;
  }
}

class LayoutTabs extends HTMLElement {
  connectedCallback() {
    this.attachShadow({ mode: "open" }).innerHTML = `
      <style>
        :host { display: flex; height: 20px; flex: none; box-sizing: border-box; padding-left: 7px; background: #f0f0f0; border-bottom: 1px solid #222; font: 11px ${FONT}; }
        span { display: flex; align-items: center; justify-content: center; height: 19px; box-sizing: border-box; }
        .on { width: 56px; background: #000; color: #fff; border-radius: 0 0 8px 4px; }
        .off { width: 62px; margin-left: 5px; background: #fff; color: #222; border: 1px solid #333; border-top: 0; border-radius: 0 0 8px 4px; }
      </style>
      <span class="on">模型</span><span class="off">布局1</span>`;
  }
}

class CadStatus extends HTMLElement {
  connectedCallback() {
    this.attachShadow({ mode: "open" }).innerHTML = `
      <style>
        :host { display: flex; align-items: center; height: 23px; flex: none; background: #ececec; padding-left: 8px; font: 12px ${FONT}; color: #111; white-space: nowrap; }
        .xy { width: 138px; font: 10px "Liberation Mono", monospace; }
        .g { margin-left: auto; margin-right: 4px; color: #aaa; letter-spacing: -1px; font-size: 9px; }
      </style>
      <span class="xy">x = 1411837 y = -99660</span><span>当前标注比例: 1</span><span class="g">⋰</span>`;
  }
}

class RebarSheet extends HTMLElement {
  connectedCallback() {
    const widths = [40,89,107,133,98,62,60,61,62,52,51,79,52,53,125,125,125,97,99,124,99,98];
    const c = "C12@150";
    const data = [
      ["12","MMK1-1","1500x2000","-6","-1.8","250","300","1250","1950","250","","底板厚","100","250",c,c,c,"3C16","",c,"1a--1a","2c--2c"],
      ["13","MMK1-2","1500x2000","-6","-1.8","250","500","300","1950","250","","底板厚","100","250",c,c,c,"3C16","",c,"1a--1a","2c--2c"],
      ["14","MMK1-3","1000x2000","-6","-1.8","250","400","800","1800","250","","底板厚","100","250",c,c,c,"3C16","",c,"1a--1a","2b--2b"],
      ["15","MMK2-1","1200x2000","-6","-1.8","250","800","50","1800","250","","底板厚","100","250",c,c,c,"3C16","",c,"1a--1a","2b--2b"]
    ];
    const cur = ["10","FMK3-2","1500x2000","-6","-1.8","300","400","550","1950","300","","底板厚","100","250",c,c,c,"4C22","",c,"1a--1a","2c--2c"];
    const cells = r => r.map((v, i) => `<td class="${i === 0 ? "n" : ""} ${i === 6 || i === 8 ? "red" : ""} ${i === 1 ? "c1" : ""}">${v}</td>`).join("");
    const blank = widths.map((w, i) => i === 0 ? '<td class="n">11</td>' : i === 1 ? '<td class="c1 nb"></td>' : '<td class="nb"></td>').join("");
    this.attachShadow({ mode: "open" }).innerHTML = `
      <style>
        :host { display: flex; position: relative; overflow: hidden; height: 171px; background: #fff; font: 17px ${FONT}; color: #111; }
        :host::before { content: ""; position: absolute; left: 0; right: 0; top: 2px; height: 8px; background: linear-gradient(rgba(0,0,0,.13), transparent); pointer-events: none; }
        .grid { width: 1891px; flex: none; }
        table { border-collapse: separate; border-spacing: 0; table-layout: fixed; width: 1891px; letter-spacing: -.6px; }
        td { height: 22px; padding: 5px 0 0; box-sizing: border-box; text-align: center; border-right: 1px solid #000; border-bottom: 1px solid #000; white-space: nowrap; line-height: 16px; }
        td.n { background: #f0f0f0; color: #666; border-right: 1px solid #bbb; border-bottom: 1px solid #ccc; }
        td.c1 { border-right: 1px solid #5fa33b; }
        td.nb { border-right-color: transparent; }
        td.c1.nb { border-right-color: #5fa33b; }
        td.top { border-bottom-color: transparent; }
        .red { color: #f00000; }
        .head-top td { box-shadow: inset 0 2px 0 #5fa33b; }
        tr.cur td { background: #e3f4d6; color: #48564a; box-shadow: inset 0 2px 0 #5fa33b, inset 0 -3px 0 #5fa33b; border-bottom-color: transparent; border-right-color: #445; }
        tr.cur td.n { background: #cfe5bf; color: #3a7a2a; border-right-color: #5fa33b; }
        tr.cur td.c1 { background: #fff; color: #111; border-right-color: #5fa33b; }
        tr.cur td.red { color: #e0573a; }
        .handle { position: absolute; left: 40px; top: 64px; width: 5px; height: 5px; background: #5fa33b; border: 1px solid #fff; }
        .scroll { position: relative; flex: 1; background: #c4c4c4; border-left: 1px solid #000; }
        .strip { position: absolute; left: 19px; right: 2px; top: 0; bottom: 0; background: #dcdcdc; }
        .strip i { position: absolute; left: 0; right: 0; top: 45px; height: 101px; background: #5fa33b; }
        .strip b { position: absolute; left: 1px; top: 92px; border: 3px solid transparent; border-right: 3px solid #fff; border-left: 0; }
        .thumb { position: absolute; left: 3px; width: 14px; top: 53px; height: 28px; background: #f0f0f0; }
        .thumb::before { content: ""; position: absolute; left: 3px; right: 3px; top: 9px; height: 8px; border-top: 1px solid #999; border-bottom: 1px solid #999; }
        .thumb::after { content: ""; position: absolute; left: 3px; right: 3px; top: 13px; border-top: 1px solid #999; }
        .ar { position: absolute; left: 5px; border: 5px solid transparent; }
        .ar.u { top: 0; border-bottom: 5px solid #666; }
        .ar.d { top: 157px; border-top: 5px solid #666; }
      </style>
      <div class="grid">
        <table>
          <colgroup>${widths.map(w => `<col style="width:${w}px">`).join("")}</colgroup>
          <tr class="head-top">
            <td class="n">1</td><td class="top c1">门框</td><td class="top">洞口尺寸</td><td class="top">建筑地面标高</td><td class="top">板顶标高</td><td class="top">墙厚</td>
            <td colspan="8" class="red">尺 &nbsp;寸</td><td colspan="6">配 &nbsp;筋</td><td class="top">水平剖面</td><td rowspan="2">门槛类型</td>
          </tr>
          <tr>
            <td class="n">2</td><td class="c1">编号</td><td>(BxH)</td><td>(m)</td><td>(m)</td><td>t</td>
            <td class="red">a1</td><td>a2</td><td class="red">b</td><td>c</td><td>d</td><td>h1</td><td>h2</td><td>h3</td>
            <td>1</td><td>2</td><td>3</td><td>4</td><td>5</td><td>6</td><td>型式</td>
          </tr>
          <tr class="cur">${cells(cur)}</tr>
          <tr>${blank}</tr>
          ${data.map(r => `<tr>${cells(r)}</tr>`).join("")}
        </table>
      </div>
      <div class="handle"></div>
      <div class="scroll">
        <span class="ar u"></span>
        <div class="thumb"></div>
        <span class="ar d"></span>
        <div class="strip"><i></i><b></b></div>
      </div>`;
  }
}

const defs = {
  "gl-desktop": GlDesktop, "ggj-window": GgjWindow, "title-bar": TitleBar, "menu-bar": MenuBar,
  "notice-box": NoticeBox, "tool-bar": ToolBar, "tool-btn": ToolBtn, "tool-sep": ToolSep,
  "tool-more": ToolMore, "combo-box": ComboBox, "tree-panel": TreePanel, "tree-item": TreeItem,
  "prop-table": PropTable, "param-panel": ParamPanel, "param-drawing": ParamDrawing,
  "status-bar": StatusBar, "status-cell": StatusCell, "cad-window": CadWindow, "net-speed": NetSpeed,
  "cad-toolbar": CadToolbar, "cad-icon": CadIcon, "cad-tabs": CadTabs, "cad-tab": CadTab,
  "cad-drawing": CadDrawing, "layout-tabs": LayoutTabs, "cad-status": CadStatus, "rebar-sheet": RebarSheet
};
for (const [name, cls] of Object.entries(defs)) customElements.define(name, cls);
</script>
</body>
</html>
